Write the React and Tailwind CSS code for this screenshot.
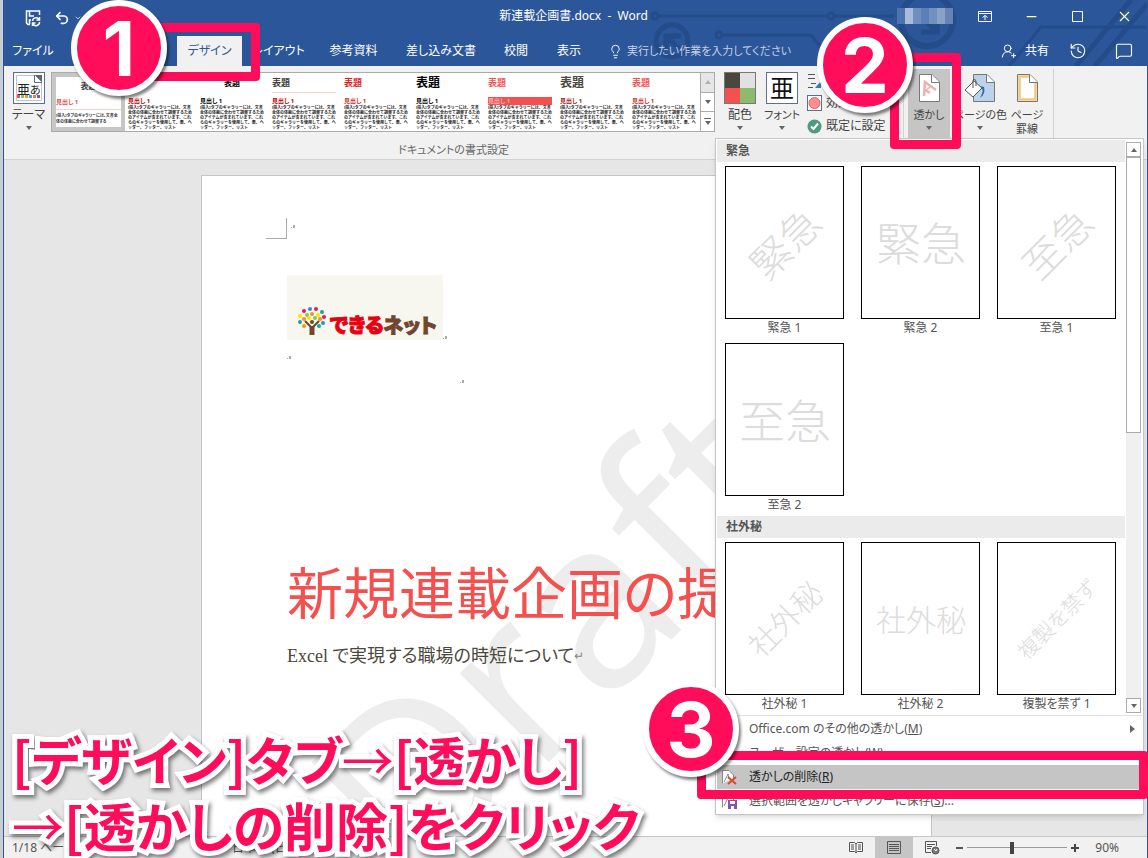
import {
  ChevronDown,
  History,
  Lightbulb,
  MessageSquare,
  Minus,
  Square,
  Undo2,
  UserRoundPlus,
  X,
} from "lucide-react";

const BODY =
  "[挿入]タブのギャラリーには、文書全体の体裁に合わせて調整するためのアイテムが含まれています。これらのギャラリーを使用して、表、ヘッダー、フッター、リスト";

const TABS = [
  { label: "レイアウト", width: "w-[73px]" },
  { label: "参考資料", width: "w-[77px]" },
  { label: "差し込み文書", width: "w-[98px]" },
  { label: "校閲", width: "w-[52px]" },
  { label: "表示", width: "w-[54px]" },
];

const STYLE_SETS = [
  { title: "text-[8px] text-[#d13438]", head: "text-[6px] text-[#c00000]" },
  { title: "text-[8px] text-black text-center", head: "text-[6px] text-black" },
  { title: "text-[9px] text-[#3b3b35] border-b border-[#f9d0d0]", head: "text-[6px] text-[#c00000]" },
  { title: "text-[9px] text-[#e0191c]", head: "text-[6px] text-[#c83030]" },
  { title: "text-[12px] text-black", head: "text-[6px] text-black" },
  { title: "text-[9px] text-[#f4504f]", head: "text-[6px] text-[#ffb0b0] bg-[#f4504f]" },
  { title: "text-[12px] text-[#4b473c]", head: "text-[6px] text-[#a02020]" },
  { title: "text-[9px] text-[#f4504f]", head: "text-[6px] text-[#c83030]" },
];

const URGENT = [
  { label: "緊急 1", text: "緊急", size: 40, rotate: -45 },
  { label: "緊急 2", text: "緊急", size: 45, rotate: 0 },
  { label: "至急 1", text: "至急", size: 40, rotate: -45 },
  { label: "至急 2", text: "至急", size: 46, rotate: 0 },
];

const CONFIDENTIAL = [
  { label: "社外秘 1", text: "社外秘", size: 30, rotate: -45 },
  { label: "社外秘 2", text: "社外秘", size: 30, rotate: 0 },
  { label: "複製を禁ず 1", text: "複製を禁ず", size: 21, rotate: -45 },
];

const LOGO_DOTS = [
  [13, 2, "#2e8bcc"], [19, 2, "#e6175c"], [7, 4, "#e6175c"], [25, 5, "#13a89e"],
  [3, 9, "#ffe100"], [10, 8, "#8dc63f"], [15, 7, "#f7931e"], [21, 8, "#ffe100"],
  [27, 10, "#e6175c"], [7, 12, "#f7931e"], [12, 11, "#ffe100"], [18, 11, "#8dc63f"],
  [23, 12, "#f7931e"], [3, 15, "#13a89e"], [26, 16, "#2e8bcc"], [7, 19, "#f7931e"], [22, 19, "#13a89e"],
];

function Caret({ up = false, className = "text-[#666]" }) {
  return (
    <svg width="6" height="4" viewBox="0 0 6 4" className={className} aria-hidden="true">
      <path d={up ? "M0 4L3 0L6 4Z" : "M0 0H6L3 4Z"} fill="currentColor" />
    </svg>
  );
}

function Circuit() {
  return (
    <svg
      className="absolute right-0 top-0 h-full w-[520px] text-[#234c88]"
      viewBox="628 0 520 66"
      fill="none"
      stroke="currentColor"
      strokeWidth="3"
      aria-hidden="true"
    >
      <circle cx="656" cy="16" r="3" />
      <path d="M660 16H828" />
      <circle cx="832" cy="16" r="3" />
      <circle cx="720" cy="35" r="3" />
      <path d="M724 35H812L822 47H900" />
      <circle cx="673" cy="41" r="16" strokeWidth="5" />
      <path d="M667 50V36H682M667 36L681 50" strokeWidth="5" />
      <path d="M836 16H895" />
      <circle cx="928" cy="20" r="26" strokeWidth="6" />
      <path d="M922 32H938V18M938 32L920 14" strokeWidth="5" />
      <path d="M1010 66L1042 27H1148" />
      <path d="M1077 66L1132 0M1096 66L1148 4" strokeWidth="5" />
    </svg>
  );
}

function TitleBar() {
  return (
    <div className="relative flex h-8 items-center text-white">
      <div className="flex flex-1 items-center gap-3 pl-5">
        <button aria-label="上書き保存" className="pt-1">
          <svg width="18" height="18" viewBox="0 0 18 18" fill="none" stroke="currentColor" strokeWidth="1.5">
            <path d="M6 15.500H4L2.500 14V2H15.500V6M5.500 2V7H10M5.500 15V11H7" />
            <path d="M8.500 12A3.500 3.500 0 0 1 15 10.500M15.500 8V11H12.500M15.500 13A3.500 3.500 0 0 1 9 15M8.500 17V14H11.500" />
          </svg>
        </button>
        <button aria-label="元に戻す" className="flex items-center gap-1 pt-1">
          <Undo2 size={16} strokeWidth={2.500} />
          <ChevronDown size={8} />
        </button>
      </div>
      <p className="mr-6 text-xs">新連載企画書.docx&nbsp; -&nbsp; Word</p>
      <div className="flex flex-1 items-center justify-end">
        <div className="mr-[25px] grid grid-cols-7 overflow-hidden">
          <span className="h-4 w-2 bg-[#4b73ad]" />
          <span className="h-4 w-2 bg-[#a9bbd8]" />
          <span className="h-4 w-2 bg-[#6f8fbf]" />
          <span className="h-4 w-2 bg-[#5c7fb5]" />
          <span className="h-4 w-2 bg-[#7391bf]" />
          <span className="h-4 w-2 bg-[#8aa2c8]" />
          <span className="h-4 w-2 bg-[#6584b5]" />
        </div>
        <button aria-label="リボンの表示オプション" className="flex w-[46px] justify-start">
          <svg width="14" height="12" viewBox="0 0 14 12" fill="none" stroke="currentColor">
            <path d="M.5 1.500H13.500V11.500H.5ZM.5 3.500H13.500M7 10V5.500M4.500 7.500L7 5.500L9.500 7.500" />
          </svg>
        </button>
        <button aria-label="最小化" className="flex w-[46px] justify-start"><Minus size={15} strokeWidth={2} /></button>
        <button aria-label="最大化" className="flex w-[46px] justify-start">
          <svg width="14" height="14" viewBox="0 0 14 14" fill="none" stroke="currentColor">
            <path d="M2.500 2.500H12.500V12.500H2.500Z" />
          </svg>
        </button>
        <button aria-label="閉じる" className="mr-[14px] flex"><X size={17} strokeWidth={1.500} /></button>
      </div>
    </div>
  );
}

function TabStrip() {
  return (
    <div className="relative flex h-[34px] items-end text-xs text-white">
      <button className="h-[30px] w-[58px]">ファイル</button>
      <button className="ml-[115px] h-[30px] w-[65px] bg-[#f1f1f1] text-[#2b579a]">デザイン</button>
      {TABS.map((tab) => (
        <button key={tab.label} className={`h-[30px] ${tab.width}`}>{tab.label}</button>
      ))}
      <button className="ml-3 flex h-[30px] items-center gap-1 text-[11px] text-[#c3d0e6]">
        <Lightbulb size={15} strokeWidth={1.500} className="text-white" />
        実行したい作業を入力してください
      </button>
      <div className="ml-auto flex h-[30px] items-center pr-[14px]">
        <button className="flex items-center gap-2"><UserRoundPlus size={16} strokeWidth={1.500} />共有</button>
        <button aria-label="履歴" className="ml-5"><History size={18} strokeWidth={1.500} /></button>
        <button aria-label="コメント" className="ml-7"><MessageSquare size={18} strokeWidth={1.500} /></button>
      </div>
    </div>
  );
}

function StyleGallery() {
  return (
    <div className="mt-[3px] flex h-[60px] min-w-0 flex-1 border border-[#ababab] bg-white font-bold">
      <button className="h-[58px] w-[73px] shrink-0 border-4 border-[#c6c6c6] text-left">
        <span className="block h-4 text-center text-[8px] leading-[14px] text-[#444]">表題</span>
        <span className="block border-b border-[#f9d0d0] text-[6px] leading-[14px] text-[#e05050]">見出し 1</span>
        <span className="block pt-[3px] text-[4px] leading-[6px] text-[#333]">
          [挿入]タブのギャラリーには、文書全体の体裁に合わせて調整する
        </span>
      </button>
      <div className="flex gap-2 pl-[3px]">
        {STYLE_SETS.map((set, i) => (
          <button key={i} className="flex h-[56px] w-16 flex-col text-left text-[#222]">
            <span className={`flex h-5 shrink-0 flex-col justify-center ${set.title}`}>表題</span>
            <span className={`mt-1 block h-[8px] shrink-0 leading-[8px] ${set.head}`}>見出し 1</span>
            <span className="block text-[4px] leading-[5px] [font-feature-settings:normal]">{BODY}</span>
          </button>
        ))}
      </div>
      <div className="ml-auto flex w-[14px] shrink-0 flex-col divide-y divide-[#ababab] border-l border-[#ababab]">
        <button aria-label="前へ" className="grid flex-1 place-items-center bg-[#e6e6e6]"><Caret up className="text-[#b0b0b0]" /></button>
        <button aria-label="次へ" className="grid flex-1 place-items-center"><Caret /></button>
        <button aria-label="その他" className="flex flex-1 flex-col items-center justify-center gap-[2px]">
          <span className="h-px w-[7px] bg-[#666]" />
          <Caret />
        </button>
      </div>
    </div>
  );
}

function BigButton({ label, icon, className, arrow = true }) {
  return (
    <button className={`flex h-[70px] shrink-0 flex-col items-center pt-[3px] leading-[14px] ${className}`}>
      <span className="h-8">{icon}</span>
      <span className="mt-1 whitespace-pre">{label}</span>
      {arrow && <Caret className="mt-1 text-[#666]" />}
    </button>
  );
}

function PageShape({ children }) {
  return (
    <svg width="32" height="32" viewBox="0 0 32 32" fill="none" aria-hidden="true">
      <path d="M6.500 2.500H19L26.500 10V29.500H6.500Z" fill="#fff" stroke="#777" />
      {children}
      <path d="M18.500 2.500V10.500H26.500" fill="#fff" stroke="#777" />
    </svg>
  );
}

function FormattingGroup() {
  return (
    <div className="flex min-w-0 flex-1 flex-col">
      <div className="flex h-[70px] items-start">
        <BigButton
          label="テーマ"
          className="w-[47px] pl-[2px]"
          icon={
            <svg width="32" height="32" viewBox="0 0 32 32" aria-hidden="true">
              <rect x=".5" y=".5" width="31" height="31" fill="#fff" stroke="#5b6f8f" />
              <path d="M3.500 28.500V3.500H21L28.500 11V28.500Z" fill="none" stroke="#b9c4d6" />
              <path d="M21 3H29V11Z" fill="#666" />
              <path d="M21.500 3V10.500H29" fill="#fff" stroke="#5b6f8f" />
              <text x="4" y="22" fontSize="13" fill="#222">亜</text>
              <text x="17" y="22" fontSize="11" fill="#222">あ</text>
              <path d="M4 23h3v3h-3z" fill="#f4504f" /><path d="M8 23h3v3h-3z" fill="#8cba6f" />
              <path d="M12 23h3v3h-3z" fill="#e0a030" /><path d="M16 23h3v3h-3z" fill="#4f9fd0" />
              <path d="M20 23h3v3h-3z" fill="#f08030" /><path d="M24 23h3v3h-3z" fill="#8455a8" />
            </svg>
          }
        />
        <StyleGallery />
        <BigButton
          label="配色"
          className="ml-2 w-[34px]"
          icon={
            <svg width="32" height="32" viewBox="0 0 32 32" aria-hidden="true">
              <path d="M0 0h16v16h-16z" fill="#4b473c" /><path d="M16 0h16v16h-16z" fill="#e1e1e1" />
              <path d="M0 16h16v16h-16z" fill="#f4504f" /><path d="M16 16h16v16h-16z" fill="#8cba6f" />
              <rect x=".5" y=".5" width="31" height="31" fill="none" stroke="#777" />
            </svg>
          }
        />
        <BigButton
          label="フォント"
          className="ml-1 w-[42px] text-[11px]"
          icon={
            <svg width="32" height="32" viewBox="0 0 32 32" aria-hidden="true">
              <rect x=".5" y=".5" width="31" height="31" fill="#fff" stroke="#5b6f8f" />
              <text x="4" y="25" fontSize="24" fill="#111">亜</text>
            </svg>
          }
        />
        <div className="ml-1 flex w-[96px] shrink-0 flex-col pt-[2px]">
          <button aria-label="段落の間隔" className="flex h-5 items-center">
            <svg width="16" height="18" viewBox="0 0 16 18" aria-hidden="true">
              <path d="M1 2.500H8M1 6.500H8M4 11.500H9M1 15.500H6" stroke="#555" />
              <path d="M8 16L14 9V16Z" fill="#3b78c0" />
            </svg>
          </button>
          <button className="flex h-6 items-center gap-1">
            <svg width="15" height="16" viewBox="0 0 15 16" aria-hidden="true">
              <rect x=".5" y=".5" width="14" height="15" fill="#fff" stroke="#5b6f8f" />
              <circle cx="7.500" cy="8" r="5.500" fill="#ff8f8f" stroke="#e06060" />
            </svg>
            効果
          </button>
          <button className="flex h-[22px] items-center gap-1">
            <svg width="15" height="15" viewBox="0 0 15 15" aria-hidden="true">
              <circle cx="7.500" cy="7.500" r="7" fill="#4f9a7f" />
              <path d="M4 7.500L6.500 10L11 4.500" fill="none" stroke="#fff" strokeWidth="2" />
            </svg>
            既定に設定
          </button>
        </div>
      </div>
      <p className="pt-[2px] text-center text-[11px] leading-[18px] text-[#666]">ドキュメントの書式設定</p>
    </div>
  );
}

function Ribbon() {
  return (
    <div className="flex h-[94px] items-start border-b border-[#d2d2d2] bg-[#f1f1f1] pt-[3px] text-xs text-[#444]">
      <FormattingGroup />
      <div className="h-[70px] w-px bg-[#d2d2d2]" />
      <BigButton
        label="透かし"
        className="ml-1 w-[42px] bg-[#c5c5c5] text-[11px]"
        icon={
          <PageShape>
            <path d="M11 24L12 10L23 18M12 18L17 21" stroke="#f0b0a8" strokeWidth="2.500" />
            <path d="M12 19L17 15" stroke="#f0b0a8" strokeWidth="1.500" />
          </PageShape>
        }
      />
      <BigButton
        label="ページの色"
        className="ml-[2px] w-[56px] text-[11px]"
        icon={
          <svg width="32" height="32" viewBox="0 0 32 32" fill="none" aria-hidden="true">
            <path d="M9.500 2.500H23L30.500 10V29.500H9.500Z" fill="#bdd3ea" stroke="#777" />
            <path d="M22.500 2.500V10.500H30.500" fill="#fff" stroke="#777" />
            <path d="M1 18L10 9L18 16L9 25Z" fill="#fff" stroke="#555" />
            <path d="M9 16V8Q11 6 12 9V14" stroke="#555" />
            <path d="M16 14Q21 17 16 26Q22 22 20 15Z" fill="#2e6db4" />
          </svg>
        }
      />
      <BigButton
        label={"ページ\n罫線"}
        className="w-[38px] text-[11px]"
        arrow={false}
        icon={
          <PageShape>
            <path d="M8.500 4.500H19L24.500 11V27.500H8.500Z" stroke="#f0c880" strokeWidth="2.500" />
          </PageShape>
        }
      />
      <div className="ml-[7px] mr-[93px] h-[70px] w-px bg-[#d2d2d2]" />
    </div>
  );
}

function ReturnMark({ className }) {
  return (
    <svg width="5" height="4" viewBox="0 0 5 4" className={className} aria-hidden="true">
      <path d="M0 2h1v1h-1zM2 0h2v3h-2z" fill="#aaa" />
    </svg>
  );
}

function Logo() {
  return (
    <div className="flex h-[65px] w-[156px] items-end gap-1 bg-[#f7f6ef] pb-1 pl-[10px]">
      <svg width="29" height="29" viewBox="0 0 29 29" aria-hidden="true">
        {LOGO_DOTS.map(([cx, cy, fill]) => (
          <circle key={`${cx}-${cy}`} cx={cx} cy={cy} r="2" fill={fill} />
        ))}
        <circle cx="15" cy="15" r="2" fill="#70462f" />
        <path d="M8 14L14 20V28M22 14L16 20V28" fill="none" stroke="#70462f" strokeWidth="2" />
        <path d="M12.500 19H17.500V28H12.500Z" fill="#70462f" />
      </svg>
      <p className="whitespace-nowrap text-xl font-black leading-5 text-[#e60012] [-webkit-text-stroke:1px_currentColor]">
        できる<span className="text-[#70462f]">ネット</span>
      </p>
    </div>
  );
}

function DocumentPage() {
  return (
    <main className="flex flex-1 overflow-hidden bg-[#e6e6e6] pt-[15px]">
      <article className="relative ml-[197px] w-[731px] overflow-hidden border-x border-t border-[#c6c6c6] bg-white">
        <svg className="absolute left-0 top-0 h-full w-full" aria-hidden="true">
          <text
            transform="translate(212 721) rotate(-45)"
            fontSize="235"
            fill="#ededed"
            className="font-['Open_Sans',sans-serif]"
          >
            Draft
          </text>
        </svg>
        <div className="relative pl-[64px] pt-[42px]">
          <div className="flex items-start gap-1">
            <span className="h-[21px] w-[21px] border-b border-r border-[#ababab]" />
            <ReturnMark className="mt-[7px]" />
          </div>
          <div className="pl-[21px] pt-9">
            <div className="flex items-end">
              <Logo />
              <ReturnMark />
            </div>
            <ReturnMark className="mt-4" />
            <ReturnMark className="ml-[173px] mt-5" />
            <h1 className="mt-[168px] whitespace-nowrap text-[56px] leading-[80px] text-[#f4504f]">新規連載企画の提案</h1>
            <p className="mt-[10px] flex items-center whitespace-nowrap font-['Liberation_Serif','Noto_Sans_CJK_JP',serif] text-lg text-[#4b473c]">
              Excel で実現する職場の時短について
              <span className="text-xs text-[#888]">↵</span>
            </p>
          </div>
        </div>
      </article>
    </main>
  );
}

function Thumb({ item }) {
  return (
    <button className="flex w-[119px] flex-col items-center">
      <svg width="119" height="153" viewBox="0 0 119 153" aria-hidden="true">
        <rect x=".5" y=".5" width="118" height="152" fill="#fff" stroke="#000" />
        <text
          transform={`translate(60 77) rotate(${item.rotate})`}
          textAnchor="middle"
          dominantBaseline="central"
          fontSize={item.size}
          fill="#dcdcdc"
          className="font-light"
        >
          {item.text}
        </text>
      </svg>
      <span className="h-[17px] leading-[17px]">{item.label}</span>
    </button>
  );
}

function GallerySection({ title, items }) {
  return (
    <section>
      <h2 className="h-[22px] bg-[#ebebeb] pl-[9px] font-bold leading-[22px]">{title}</h2>
      <div className="grid grid-cols-[repeat(3,119px)] gap-x-[17px] gap-y-[7px] pb-[3px] pl-2 pt-1">
        {items.map((item) => (
          <Thumb key={item.label} item={item} />
        ))}
      </div>
    </section>
  );
}

function MenuItem({ icon, children, active = false, trailing }) {
  return (
    <button
      className={`flex h-6 w-full items-center pl-1 pr-[7px] text-left ${active ? "bg-[#c5c5c5] text-[#222]" : ""}`}
    >
      <span className="w-7">{icon}</span>
      <span className="flex-1">{children}</span>
      {trailing}
    </button>
  );
}

function WatermarkMenu() {
  return (
    <div className="absolute right-1 top-[138px] w-[429px] border border-[#c6c6c6] bg-white p-px text-xs text-[#555] shadow-md">
      <div className="mb-px flex border-b border-[#e1e1e1]">
        <div className="w-[408px]">
          <GallerySection title="緊急" items={URGENT} />
          <GallerySection title="社外秘" items={CONFIDENTIAL} />
        </div>
        <div className="my-[2px] ml-px flex w-[15px] flex-col bg-[#f0f0f0]">
          <button aria-label="上へ" className="grid h-[15px] place-items-center border border-[#ababab] bg-white"><Caret up /></button>
          <div className="h-[276px] border border-[#ababab] bg-white" />
          <button aria-label="下へ" className="mt-auto grid h-[15px] place-items-center border border-[#ababab] bg-white"><Caret /></button>
        </div>
      </div>
      <MenuItem
        trailing={<svg width="5" height="8" viewBox="0 0 5 8"><path d="M0 0L5 4L0 8Z" fill="#666" /></svg>}
      >
        Office.com のその他の透かし(<u>M</u>)
      </MenuItem>
      <MenuItem>ユーザー設定の透かし(<u>W</u>)...</MenuItem>
      <MenuItem
        active
        icon={
          <svg width="17" height="17" viewBox="0 0 17 17" fill="none" aria-hidden="true">
            <path d="M1.500 14.500V1.500H8L12.500 6V9M3 13L7 5L8 10" fill="#fff" stroke="#888" />
            <path d="M7 8L15 15M15 8L7 15" stroke="#d9492f" strokeWidth="2" />
          </svg>
        }
      >
        透かしの削除(<u>R</u>)
      </MenuItem>
      <MenuItem
        icon={
          <svg width="17" height="17" viewBox="0 0 17 17" fill="none" aria-hidden="true">
            <path d="M1.500 14.500V1.500H8L12.500 6V9M3 13L7 5" fill="#fff" stroke="#888" />
            <path d="M7 7H16V16H7Z" fill="#8455a8" />
            <path d="M9 8H14V11H9ZM10 13H13V16H10Z" fill="#fff" />
          </svg>
        }
      >
        選択範囲を透かしギャラリーに保存(<u>S</u>)...
      </MenuItem>
    </div>
  );
}

function StatusBar() {
  return (
    <footer className="flex h-[22px] items-center border-t border-[#c6c6c6] bg-[#f1f1f1] pl-2 text-xs text-[#555]">
      <span className="w-[187px]">1/18 ページ</span>
      <svg width="13" height="12" viewBox="0 0 13 12" fill="none" stroke="#666" aria-hidden="true">
        <path d="M.5 1.500H5L6.500 3L8 1.500H12.500V10.500H8L6.500 12L5 10.500H.5ZM6.500 3V12" />
      </svg>
      <span className="ml-5">日本語 (日本)</span>
      <button aria-label="閲覧モード" className="ml-auto px-3">
        <svg width="14" height="13" viewBox="0 0 14 13" fill="none" stroke="#555" aria-hidden="true">
          <path d="M.5 1.500H5.500L7 3L8.500 1.500H13.500V10.500H8.500L7 12L5.500 10.500H.5ZM7 3V12M2 4H5M2 6H5M2 8H5M9 4H12M9 6H12M9 8H12" />
        </svg>
      </button>
      <button aria-label="印刷レイアウト" className="grid h-full w-[38px] place-items-center bg-[#c5c5c5]">
        <svg width="14" height="13" viewBox="0 0 14 13" fill="none" stroke="#555" aria-hidden="true">
          <path d="M.5 .5H13.500V12.500H.5ZM2 3.500H12M2 5.500H12M2 7.500H12M2 9.500H12" />
        </svg>
      </button>
      <button aria-label="Web レイアウト" className="px-3">
        <svg width="15" height="14" viewBox="0 0 15 14" fill="none" stroke="#555" aria-hidden="true">
          <path d="M6 11.500H.5V.5H11.500V5M2 3.500H10M2 5.500H7M2 7.500H6" />
          <circle cx="10.500" cy="9.500" r="3.500" fill="#777" />
          <path d="M9 8L11 10L12 8" stroke="#fff" />
        </svg>
      </button>
      <button aria-label="縮小" className="ml-1 h-[2px] w-[7px] bg-[#555]" />
      <label className="ml-1 flex items-center">
        <span className="sr-only">ズーム</span>
        <input
          type="range"
          min="10"
          max="190"
          defaultValue="90"
          className="h-3 w-[100px] appearance-none bg-[linear-gradient(#999,#999)] bg-[length:100%_1px] bg-center bg-no-repeat [&::-webkit-slider-thumb]:h-3 [&::-webkit-slider-thumb]:w-1 [&::-webkit-slider-thumb]:appearance-none [&::-webkit-slider-thumb]:bg-[#444]"
        />
      </label>
      <button aria-label="拡大" className="ml-1">
        <svg width="8" height="8" viewBox="0 0 8 8" aria-hidden="true"><path d="M4 0V8M0 4H8" stroke="#444" strokeWidth="2" /></svg>
      </button>
      <span className="ml-4 mr-7">90%</span>
    </footer>
  );
}

function Step({ number, className }) {
  return (
    <div
      className={`absolute grid h-[96px] w-[96px] place-items-center rounded-full border-[6px] border-white bg-[#ff0c5a] font-['Inter',sans-serif] text-[76px] font-bold leading-none text-white shadow-[2px_3px_3px_rgba(0,0,0,0.5)] ${className}`}
    >
      {number}
    </div>
  );
}

function Annotations() {
  return (
    <div className="pointer-events-none absolute inset-0">
      <div className="absolute left-[130px] top-[23px] h-[58px] w-[130px] rounded border-[9px] border-[#ff0c5a]" />
      <Step number="1" className="left-[71px] top-0" />
      <div className="absolute right-[187px] top-[53px] h-[96px] w-[71px] rounded border-[9px] border-[#ff0c5a]" />
      <Step number="2" className="right-[235px] top-[17px]" />
      <div className="absolute right-0 top-[751px] h-[48px] w-[451px] rounded border-[9px] border-[#ff0c5a]" />
      <Step number="3" className="right-[409px] top-[681px]" />
      <p className="absolute bottom-0 left-3 whitespace-nowrap font-['Noto_Sans_CJK_JP',sans-serif] text-[52px] font-bold leading-[66px] text-[#ff0c5a] drop-shadow-[2px_3px_2px_rgba(0,0,0,0.5)] [-webkit-text-stroke:10px_white] [paint-order:stroke_fill]">
        [デザイン]タブ<span className="font-normal">→</span>[透かし]
        <br />
        <span className="font-normal">→</span>[透かしの削除]をクリック
      </p>
    </div>
  );
}

export default function App() {
  return (
    <div
      lang="ja"
      className="relative flex min-h-screen flex-col overflow-hidden bg-[#c9cdd3] pl-[3px] font-['Noto_Sans','Noto_Sans_CJK_JP',sans-serif] [font-feature-settings:'palt']"
    >
      <div className="flex flex-1 flex-col border-x border-[#2b579a]">
        <header className="relative bg-[#2b579a]">
          <Circuit />
          <TitleBar />
          <TabStrip />
        </header>
        <Ribbon />
        <DocumentPage />
        <StatusBar />
      </div>
      <WatermarkMenu />
      <Annotations />
    </div>
  );
}
